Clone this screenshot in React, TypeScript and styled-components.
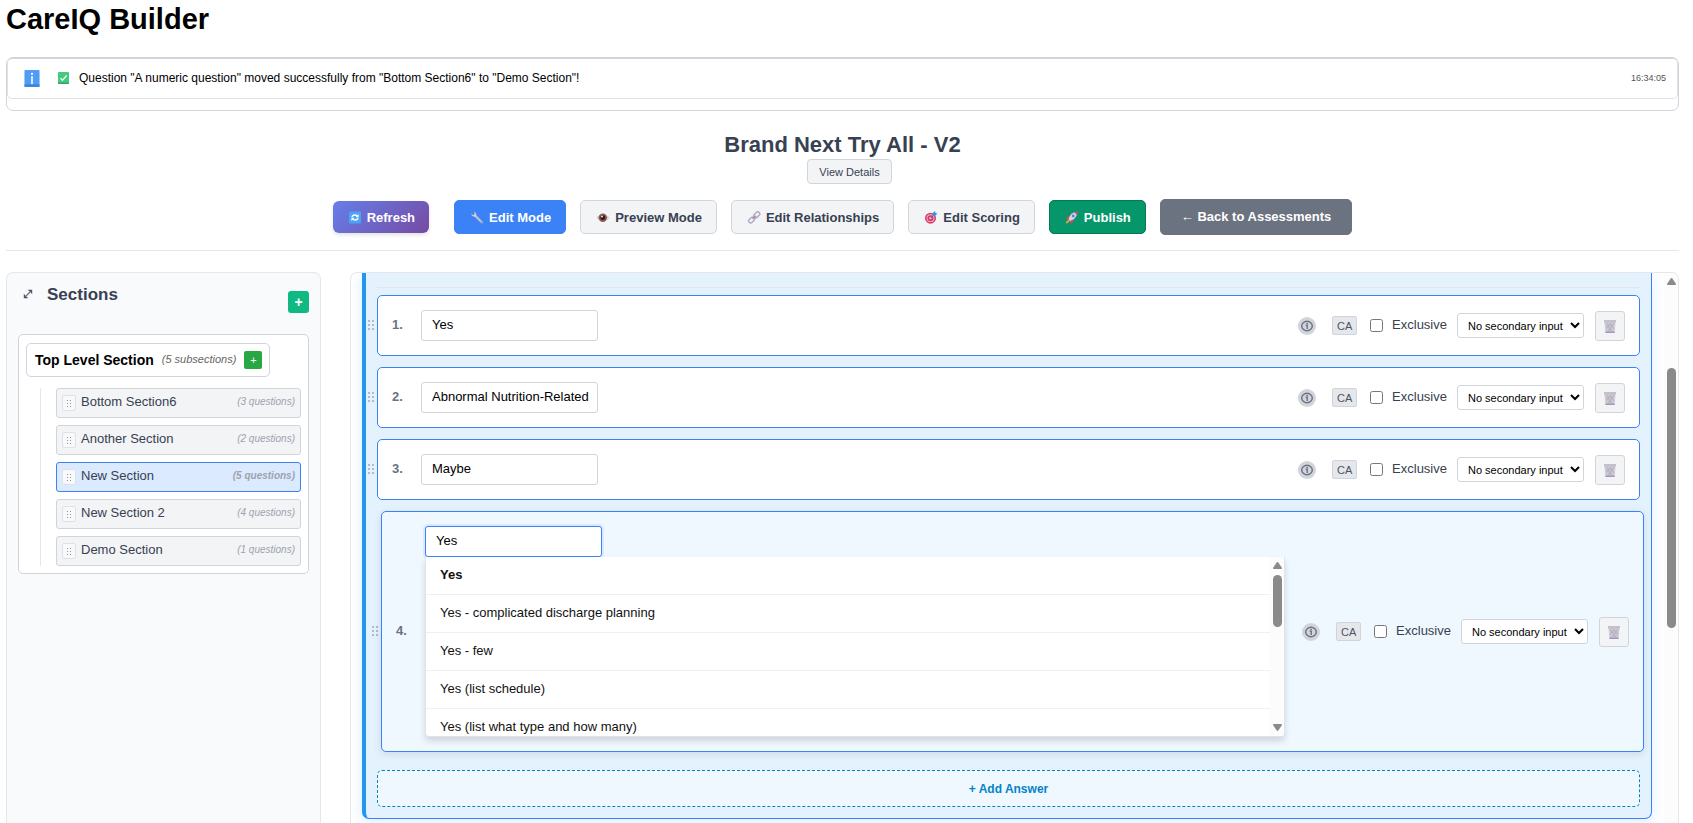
import React from "react";
import styled, { createGlobalStyle, css } from "styled-components";

const GlobalStyle = createGlobalStyle`
  *, *::before, *::after { box-sizing: border-box; }
  body { margin: 0; background: #fff; color: #000; }
  body, button, input, select {
    font-family: Arial, "Liberation Sans", sans-serif;
    font-size: 13px;
  }
  h1, h2, h3, ul { margin: 0; padding: 0; }
  ul { list-style: none; }
  svg { display: block; flex: none; }
`;

/* ---------- Page frame ---------- */

const Page = styled.div`
  min-height: 100vh;
  display: flex;
  flex-direction: column;
  padding: 2px 14px 0 6px;
`;

const AppTitle = styled.h1`
  font-size: 29px;
  line-height: 34px;
`;

const MessageLog = styled.section`
  margin-top: 21px;
  padding-bottom: 11px;
  border: 1px solid #d1d5db;
  border-radius: 7px;
`;

const Message = styled.div`
  display: flex;
  align-items: center;
  height: 41px;
  padding: 0 11px 0 16px;
  border: 1px solid #dfe1e5;
  border-top-color: #d1d5db;
  border-radius: 5px;
  font-size: 12px;
`;

const MessageText = styled.span`
  flex: 1;
  display: flex;
  align-items: center;
  gap: 10px;
  padding: 0 0 2px 18px;
`;

const MessageTime = styled.time`
  font-size: 9px;
  color: #555;
  padding-bottom: 2px;
`;

const Header = styled.header`
  display: flex;
  flex-direction: column;
  align-items: center;
  margin-top: 22px;
  padding-bottom: 15px;
  border-bottom: 1px solid #e5e7eb;
`;

const AssessmentTitle = styled.h2`
  font-size: 22px;
  line-height: 24px;
  color: #374151;
`;

const DetailsButton = styled.button`
  height: 25px;
  margin: 2px 0 0 14px;
  padding: 0 11px;
  border: 1px solid #d1d5db;
  border-radius: 4px;
  background: #f3f4f6;
  color: #374151;
  font-size: 11px;
`;

const Actions = styled.nav`
  display: flex;
  align-items: center;
  gap: 14px;
  margin-top: 15px;
`;

type Tone = "refresh" | "active" | "plain" | "publish" | "back";

const tones = {
  refresh: css`
    height: 32px;
    margin-right: 11px;
    padding: 0 13px;
    border-color: transparent;
    border-radius: 6px;
    background: linear-gradient(135deg, #667eea 0%, #764ba2 100%) border-box;
    color: #fff;
    box-shadow: 0 2px 4px rgba(0, 0, 0, 0.12);
  `,
  active: css`
    border-color: #3b82f6;
    background: #3b82f6;
    color: #fff;
  `,
  plain: css`
    border-color: #d1d5db;
    background: #f3f4f6;
    color: #374151;
  `,
  publish: css`
    border-color: #047857;
    background: #059669;
    color: #fff;
  `,
  back: css`
    height: 36px;
    padding: 0 20px 2px;
    border-color: #6b7280;
    background: #6b7280;
    color: #fff;
  `,
};

const ActionButton = styled.button<{ $tone: Tone }>`
  display: flex;
  align-items: center;
  gap: 4px;
  height: 34px;
  padding: 0 14px;
  border: 1px solid;
  border-radius: 5px;
  font-weight: bold;
  white-space: nowrap;
  ${({ $tone }) => tones[$tone]}
`;

const Workspace = styled.div`
  flex: 1;
  display: flex;
  gap: 29px;
  margin-top: 21px;
`;

/* ---------- Sections sidebar ---------- */

const Sidebar = styled.aside`
  flex: 0 0 315px;
  padding: 11px;
  border: 1px solid #e5e7eb;
  border-bottom: 0;
  border-radius: 7px 7px 0 0;
  background: #f9fafb;
`;

const SidebarHeader = styled.div`
  display: flex;
  align-items: flex-start;
  gap: 10px;
  margin-bottom: 21px;
`;

const ExpandButton = styled.button`
  display: flex;
  align-items: center;
  justify-content: center;
  width: 19px;
  height: 20px;
  padding: 0;
  border: 0;
  background: none;
`;

const SidebarTitle = styled.h3`
  flex: 1;
  font-size: 17px;
  line-height: 22px;
  color: #374151;
`;

const AddSectionButton = styled.button`
  width: 21px;
  height: 22px;
  margin-top: 7px;
  padding: 0;
  border: 0;
  border-radius: 3px;
  background: #10b981;
  color: #fff;
  font-size: 14px;
  font-weight: bold;
`;

const Tree = styled.div`
  padding: 8px 7px 7px;
  border: 1px solid #d1d5db;
  border-radius: 5px;
  background: #fff;
`;

const TopSection = styled.div`
  display: inline-flex;
  align-items: center;
  gap: 8px;
  height: 34px;
  padding: 0 7px 0 8px;
  border: 1px solid #d1d5db;
  border-radius: 5px;
  font-size: 14px;
  font-weight: bold;
  white-space: nowrap;
  vertical-align: top;
`;

const SubsectionCount = styled.em`
  padding-bottom: 2px;
  font-size: 11px;
  font-weight: normal;
  color: #666;
`;

const AddSubsectionButton = styled.button`
  width: 18px;
  height: 18px;
  padding: 0;
  border: 0;
  border-radius: 2px;
  background: #28a745;
  color: #fff;
  font-size: 11px;
`;

const SubsectionList = styled.ul`
  display: flex;
  flex-direction: column;
  gap: 7px;
  margin: 11px 0 0 14px;
  padding-left: 15px;
  border-left: 1px solid #e5e7eb;
`;

const Subsection = styled.li<{ $selected: boolean }>`
  display: flex;
  align-items: center;
  gap: 5px;
  height: 30px;
  padding: 0 5px;
  border: 1px solid ${({ $selected }) => ($selected ? "#3b82f6" : "#d1d5db")};
  border-radius: 3px;
  background: ${({ $selected }) => ($selected ? "#dbeafe" : "#f3f4f6")};
  color: #374151;
`;

const SubsectionHandle = styled.span`
  display: flex;
  align-items: center;
  justify-content: center;
  width: 14px;
  height: 16px;
  border: 1px solid #dee2e6;
  border-radius: 2px;
  background: #f8f9fa;
`;

const SubsectionName = styled.span`
  flex: 1;
  padding-bottom: 3px;
`;

const QuestionCount = styled.em<{ $selected: boolean }>`
  padding-bottom: 3px;
  font-size: 10px;
  font-weight: ${({ $selected }) => ($selected ? "bold" : "normal")};
  color: #9ca3af;
`;

/* ---------- Question panel ---------- */

const Main = styled.main`
  flex: 1;
  min-width: 0;
  display: flex;
  border: 1px solid #e5e7eb;
  border-bottom: 0;
  border-radius: 7px 7px 0 0;
  overflow: hidden;
`;

const QuestionArea = styled.div`
  flex: 1;
  min-width: 0;
  padding: 0 12px 4px 11px;
`;

const QuestionCard = styled.section`
  padding: 14px 11px 11px 0;
  border: 1px solid #3b82f6;
  border-top: 0;
  border-left: 4px solid #2196f3;
  border-radius: 0 0 7px 7px;
  background: #e3f2fd;
  box-shadow: 0 4px 14px rgba(33, 150, 243, 0.16);
`;

const Divider = styled.div`
  height: 1px;
  margin: 0 0 7px 11px;
  background: #dfe6ee;
`;

const AnswerList = styled.ul`
  display: flex;
  flex-direction: column;
  gap: 11px;
`;

const Answer = styled.li<{ $hovered: boolean }>`
  display: flex;
  align-items: center;
  ${({ $hovered }) => $hovered && "transform: translateX(4px);"}
`;

const AnswerHandle = styled.span`
  flex: 0 0 11px;
  padding: 0 0 2px 2px;
`;

const AnswerCard = styled.div<{ $hovered: boolean }>`
  flex: 1;
  display: flex;
  align-items: center;
  gap: 10px;
  padding: 14px;
  border: 1px solid #3b82f6;
  border-radius: 5px;
  background: ${({ $hovered }) => ($hovered ? "#f0f8ff" : "#fff")};
  box-shadow: ${({ $hovered }) => ($hovered ? "0 2px 8px rgba(0, 0, 0, 0.1)" : "none")};
`;

const AnswerNumber = styled.span`
  flex: 0 0 19px;
  padding-bottom: 3px;
  font-weight: bold;
  color: #6b7280;
`;

const AnswerField = styled.div`
  flex: 1;
  min-width: 0;
`;

const AnswerInput = styled.input<{ $focused: boolean }>`
  display: block;
  width: 177px;
  height: 31px;
  padding: 0 8px 3px 10px;
  border: 1px solid ${({ $focused }) => ($focused ? "#3b82f6" : "#d1d5db")};
  border-radius: 3px;
  outline: none;
  background: #fff;
  ${({ $focused }) => $focused && "box-shadow: 0 0 0 2px rgba(59, 130, 246, 0.12);"}
`;

const Suggestions = styled.div`
  display: flex;
  height: 180px;
  border: 1px solid #e0e4e8;
  border-top: 0;
  border-radius: 0 0 4px 4px;
  background: #fff;
  box-shadow: 0 4px 6px rgba(0, 0, 0, 0.14);
  overflow: hidden;
`;

const SuggestionList = styled.ul`
  flex: 1;
`;

const Suggestion = styled.li<{ $exact: boolean }>`
  height: 38px;
  padding: 0 14px;
  border-bottom: 1px solid #f0f0f0;
  line-height: 35px;
  font-weight: ${({ $exact }) => ($exact ? "bold" : "normal")};
  color: #111;
`;

const InfoButton = styled.button`
  display: flex;
  align-items: center;
  justify-content: center;
  width: 18px;
  height: 18px;
  margin: 0 6px 0 7px;
  padding: 0;
  border: 0;
  border-radius: 50%;
  background: #d1d5db;
`;

const TagButton = styled.button`
  width: 25px;
  height: 19px;
  padding: 0;
  border: 1px solid #d1d5db;
  border-radius: 2px;
  background: #e5e7eb;
  color: #4b5563;
  font-size: 11px;
`;

const ExclusiveLabel = styled.label`
  display: flex;
  align-items: center;
  gap: 9px;
  color: #374151;
`;

const ExclusiveBox = styled.input`
  width: 13px;
  height: 13px;
  margin: 0 0 0 3px;
`;

const ExclusiveText = styled.span`
  padding-bottom: 3px;
`;

const SecondarySelect = styled.select`
  width: 127px;
  height: 25px;
  padding: 0 0 0 6px;
  border: 1px solid #d1d5db;
  border-radius: 3px;
  background: #fff;
  color: #000;
  font-size: 11px;
`;

const DeleteButton = styled.button`
  display: flex;
  align-items: center;
  justify-content: center;
  width: 30px;
  height: 30px;
  margin-left: 1px;
  padding: 2px 0 0;
  border: 1px solid #d1d5db;
  border-radius: 3px;
  background: #f3f4f6;
`;

const AddAnswerButton = styled.button`
  display: block;
  width: calc(100% - 11px);
  height: 37px;
  margin: 18px 0 0 11px;
  border: 1px dashed #0284c7;
  border-radius: 5px;
  background: #f0f8ff;
  color: #0284c7;
  font-size: 12px;
  font-weight: bold;
`;

/* ---------- Scroll bars ---------- */

const ScrollTrack = styled.div`
  flex: 0 0 14px;
  display: flex;
  flex-direction: column;
  align-items: center;
  padding: 5px 0;
  background: #fcfcfc;
`;

const ScrollThumb = styled.div<{ $before: number; $length: number }>`
  width: 9px;
  height: ${({ $length }) => $length}px;
  margin-top: ${({ $before }) => $before}px;
  border-radius: 5px;
  background: #8a8a8a;
`;

const ScrollSpacer = styled.div`
  flex: 1;
`;

const Arrow = ({ down = false }: { down?: boolean }) => (
  <svg width="9" height="7" viewBox="0 0 9 7" fill="#8a8a8a" aria-hidden="true">
    <path
      d={down ? "M.6 0h7.8q.9.6.3 1.500L5.300 6.500q-.8.800-1.600 0L.3 1.500Q-.3.600.6 0z" : "M.6 7h7.800q.9-.6.3-1.500L5.300.5q-.8-.8-1.600 0L.3 5.500Q-.3 6.400.6 7z"}
    />
  </svg>
);

/* ---------- Icons ---------- */

const NoticeIcon = () => (
  <svg width="16" height="17" viewBox="0 0 16 18" aria-hidden="true">
    <rect width="16" height="18" rx="1" fill="#4f9df5" />
    <rect y="15" width="16" height="3" rx="1" fill="#3d86e0" />
    <circle cx="8" cy="4" r="1.200" fill="#fff" />
    <rect x="7.200" y="6.500" width="1.600" height="8.500" fill="#fff" />
  </svg>
);

const CheckIcon = () => (
  <svg width="11" height="12" viewBox="0 0 11 12" aria-hidden="true">
    <rect width="11" height="12" rx="1" fill="#45c97f" />
    <rect y="10.500" width="11" height="1.500" rx=".7" fill="#2fa968" />
    <path d="M2.500 6.200l2 2.100 4.200-5" fill="none" stroke="#fff" strokeWidth="1.300" />
  </svg>
);

const RefreshIcon = () => (
  <svg width="16" height="13" viewBox="0 0 16 13" aria-hidden="true">
    <rect x="2" y=".5" width="12" height="12" rx="1" fill="#4ba3f5" />
    <path d="M5 6.200q.4-2.200 2.800-2.200 1.500 0 2.400 1.100M11 6.800q-.4 2.200-2.800 2.200-1.500 0-2.400-1.100" fill="none" stroke="#fff" strokeWidth="1.300" />
    <path d="M11.600 3v3.200H8.500zM4.400 10V6.800h3.100z" fill="#fff" />
  </svg>
);

const WrenchIcon = () => (
  <svg width="16" height="13" viewBox="0 0 16 13" aria-hidden="true">
    <path d="M6 4.500l6.800 6.800" stroke="#c9bfd3" strokeWidth="2.200" strokeLinecap="round" />
    <path d="M2.300 2.600l2 1.700 1.500-1.200L5 .8a3 3 0 0 1 2 4.200 3 3 0 0 1-4.700-2.400z" fill="#d8cfe0" />
    <circle cx="12.300" cy="10.900" r=".7" fill="#8d7ea3" />
  </svg>
);

const EyeIcon = () => (
  <svg width="16" height="13" viewBox="0 0 16 13" aria-hidden="true">
    <path d="M1.500 7q6-7.500 13 0-6.500 6.500-13 0z" fill="#d6c9d4" />
    <circle cx="7.800" cy="6.700" r="4.200" fill="#8b5a4f" />
    <circle cx="7.800" cy="6.700" r="2.400" fill="#2b1a20" />
    <circle cx="7" cy="5.500" r=".9" fill="#fff" />
  </svg>
);

const LinkIcon = () => (
  <svg width="16" height="13" viewBox="0 0 16 13" fill="none" stroke="#b7aac4" strokeWidth="1.500" aria-hidden="true">
    <rect x="-3.300" y="-2" width="6.600" height="4" rx="2" transform="translate(10.800 3.800) rotate(-45)" />
    <rect x="-3.300" y="-2" width="6.600" height="4" rx="2" transform="translate(5.600 9) rotate(-45)" />
    <path d="M6.600 8l3.200-3.200" stroke="#9c8dac" />
  </svg>
);

const TargetIcon = () => (
  <svg width="16" height="13" viewBox="0 0 16 13" aria-hidden="true">
    <circle cx="7.500" cy="7.200" r="5.500" fill="#d93a66" />
    <circle cx="7.500" cy="7.200" r="3.900" fill="#e9b9ca" />
    <circle cx="7.500" cy="7.200" r="3" fill="#d93a66" />
    <circle cx="7.500" cy="7.200" r="1.100" fill="#f1dfe8" />
    <path d="M7.500 7.200l4-4" stroke="#3f6fa8" strokeWidth="1" />
    <path d="M9.600 5V2.300L12 0l.5 1.900 2 .5-2.300 2.400z" fill="#2f95ea" />
  </svg>
);

const RocketIcon = () => (
  <svg width="16" height="13" viewBox="0 0 16 13" aria-hidden="true">
    <path d="M5.500 4.500L2.800 6.300l-.5 2.200 3-.6zM9.800 8.500l-1.400 3.200-2.300.8.500-3z" fill="#e23b6b" />
    <path d="M4.500 8.300Q6 3 10.500 1.300l2.500 2.500Q11 8.500 6.200 10z" fill="#d9d0e2" />
    <path d="M10.300 1.300Q12 .4 14 .5q0 1.900-1 3.500z" fill="#e8416f" />
    <circle cx="9.200" cy="5" r="1.400" fill="#3b8fdd" />
    <path d="M4.600 8.600l1.400 1.300-2.600 2.300-1.600.2.400-1.700z" fill="#f59a3c" />
  </svg>
);

const ExpandIcon = () => (
  <svg width="10" height="10" viewBox="0 0 10 10" aria-hidden="true">
    <path d="M2 8l6-6" stroke="#6b7280" strokeWidth="1.200" />
    <path d="M4.800.8h4.400v4.400L7.800 3.800V2.200H6.200zM5.200 9.200H.8V4.800l1.400 1.400v1.600h1.600z" fill="#4b5563" />
  </svg>
);

const DotsIcon = ({ size, gap, color }: { size: number; gap: number; color: string }) => {
  const step = size + gap;
  const width = size * 2 + gap;
  const height = size * 3 + gap * 2;
  return (
    <svg width={width} height={height} viewBox={`0 0 ${width} ${height}`} fill={color} aria-hidden="true">
      {[0, 1, 2].flatMap((row) =>
        [0, 1].map((col) => (
          <rect key={`${row}-${col}`} x={col * step} y={row * step} width={size} height={size} />
        ))
      )}
    </svg>
  );
};

const InfoIcon = () => (
  <svg width="12" height="12" viewBox="0 0 12 12" fill="none" stroke="#6b7280" aria-hidden="true">
    <ellipse cx="6" cy="6" rx="5.300" ry="4.700" strokeWidth="1.400" />
    <path d="M4.700 5.300h1.500v3.800" strokeWidth="1.400" />
    <rect x="5.300" y="2.900" width="1.600" height="1.200" fill="#6b7280" stroke="none" />
  </svg>
);

const TrashIcon = () => (
  <svg width="12" height="13" viewBox="0 0 12 13" aria-hidden="true">
    <path d="M.5 2h11l-1 11h-9z" fill="#cdc9d4" />
    <path d="M0 0h12v2.500H0z" fill="#c3c1c8" />
    <path d="M1.500 11.500h9V13h-9z" fill="#a395b8" />
    <path d="M2.500 3.500l5.500 8M6 3.500l3.500 5M9.500 3.500l-5.500 8M6 3.500L2.500 8.500" stroke="#a9a2b4" strokeWidth=".8" />
  </svg>
);

/* ---------- Data ---------- */

const subsections = [
  { name: "Bottom Section6", count: 3 },
  { name: "Another Section", count: 2 },
  { name: "New Section", count: 5, selected: true },
  { name: "New Section 2", count: 4 },
  { name: "Demo Section", count: 1 },
];

const suggestions = [
  "Yes",
  "Yes - complicated discharge planning",
  "Yes - few",
  "Yes (list schedule)",
  "Yes (list what type and how many)",
];

const answers = [
  { text: "Yes" },
  { text: "Abnormal Nutrition-Related" },
  { text: "Maybe" },
  { text: "Yes", editing: true },
];

const modes: { label: string; tone: Tone; icon: React.ReactNode }[] = [
  { label: "Refresh", tone: "refresh", icon: <RefreshIcon /> },
  { label: "Edit Mode", tone: "active", icon: <WrenchIcon /> },
  { label: "Preview Mode", tone: "plain", icon: <EyeIcon /> },
  { label: "Edit Relationships", tone: "plain", icon: <LinkIcon /> },
  { label: "Edit Scoring", tone: "plain", icon: <TargetIcon /> },
  { label: "Publish", tone: "publish", icon: <RocketIcon /> },
];

/* ---------- Views ---------- */

function SectionsSidebar() {
  return (
    <Sidebar>
      <SidebarHeader>
        <ExpandButton type="button" aria-label="Expand sections">
          <ExpandIcon />
        </ExpandButton>
        <SidebarTitle>Sections</SidebarTitle>
        <AddSectionButton type="button" aria-label="Add section">+</AddSectionButton>
      </SidebarHeader>
      <Tree>
        <TopSection>
          Top Level Section
          <SubsectionCount>(5 subsections)</SubsectionCount>
          <AddSubsectionButton type="button" aria-label="Add subsection">+</AddSubsectionButton>
        </TopSection>
        <SubsectionList>
          {subsections.map(({ name, count, selected = false }) => (
            <Subsection key={name} $selected={selected}>
              <SubsectionHandle>
                <DotsIcon size={1} gap={2} color="#8d949b" />
              </SubsectionHandle>
              <SubsectionName>{name}</SubsectionName>
              <QuestionCount $selected={selected}>({count} questions)</QuestionCount>
            </Subsection>
          ))}
        </SubsectionList>
      </Tree>
    </Sidebar>
  );
}

function AnswerItem({ index, text, editing }: { index: number; text: string; editing: boolean }) {
  return (
    <Answer $hovered={editing}>
      <AnswerHandle>
        <DotsIcon size={2} gap={2} color="#b3b9c6" />
      </AnswerHandle>
      <AnswerCard $hovered={editing}>
        <AnswerNumber>{index}.</AnswerNumber>
        <AnswerField>
          <AnswerInput type="text" aria-label={`Answer ${index}`} defaultValue={text} $focused={editing} />
          {editing && (
            <Suggestions>
              <SuggestionList>
                {suggestions.map((item) => (
                  <Suggestion key={item} $exact={item === text}>{item}</Suggestion>
                ))}
              </SuggestionList>
              <ScrollTrack aria-hidden="true">
                <Arrow />
                <ScrollThumb $before={6} $length={52} />
                <ScrollSpacer />
                <Arrow down />
              </ScrollTrack>
            </Suggestions>
          )}
        </AnswerField>
        <InfoButton type="button" aria-label="Answer information">
          <InfoIcon />
        </InfoButton>
        <TagButton type="button">CA</TagButton>
        <ExclusiveLabel>
          <ExclusiveBox type="checkbox" />
          <ExclusiveText>Exclusive</ExclusiveText>
        </ExclusiveLabel>
        <SecondarySelect aria-label={`Secondary input for answer ${index}`}>
          <option>No secondary input</option>
        </SecondarySelect>
        <DeleteButton type="button" aria-label="Delete answer">
          <TrashIcon />
        </DeleteButton>
      </AnswerCard>
    </Answer>
  );
}

export default function App() {
  return (
    <>
      <GlobalStyle />
      <Page>
        <AppTitle>CareIQ Builder</AppTitle>
        <MessageLog>
          <Message>
            <NoticeIcon />
            <MessageText>
              <CheckIcon />
              Question "A numeric question" moved successfully from "Bottom Section6" to "Demo Section"!
            </MessageText>
            <MessageTime>16:34:05</MessageTime>
          </Message>
        </MessageLog>
        <Header>
          <AssessmentTitle>Brand Next Try All - V2</AssessmentTitle>
          <DetailsButton type="button">View Details</DetailsButton>
          <Actions>
            {modes.map(({ label, tone, icon }) => (
              <ActionButton key={label} type="button" $tone={tone}>
                {icon}
                {label}
              </ActionButton>
            ))}
            <ActionButton type="button" $tone="back">← Back to Assessments</ActionButton>
          </Actions>
        </Header>
        <Workspace>
          <SectionsSidebar />
          <Main>
            <QuestionArea>
              <QuestionCard>
                <Divider />
                <AnswerList>
                  {answers.map(({ text, editing = false }, i) => (
                    <AnswerItem key={i} index={i + 1} text={text} editing={editing} />
                  ))}
                </AnswerList>
                <AddAnswerButton type="button">+ Add Answer</AddAnswerButton>
              </QuestionCard>
            </QuestionArea>
            <ScrollTrack aria-hidden="true">
              <Arrow />
              <ScrollThumb $before={83} $length={260} />
            </ScrollTrack>
          </Main>
        </Workspace>
      </Page>
    </>
  );
}
